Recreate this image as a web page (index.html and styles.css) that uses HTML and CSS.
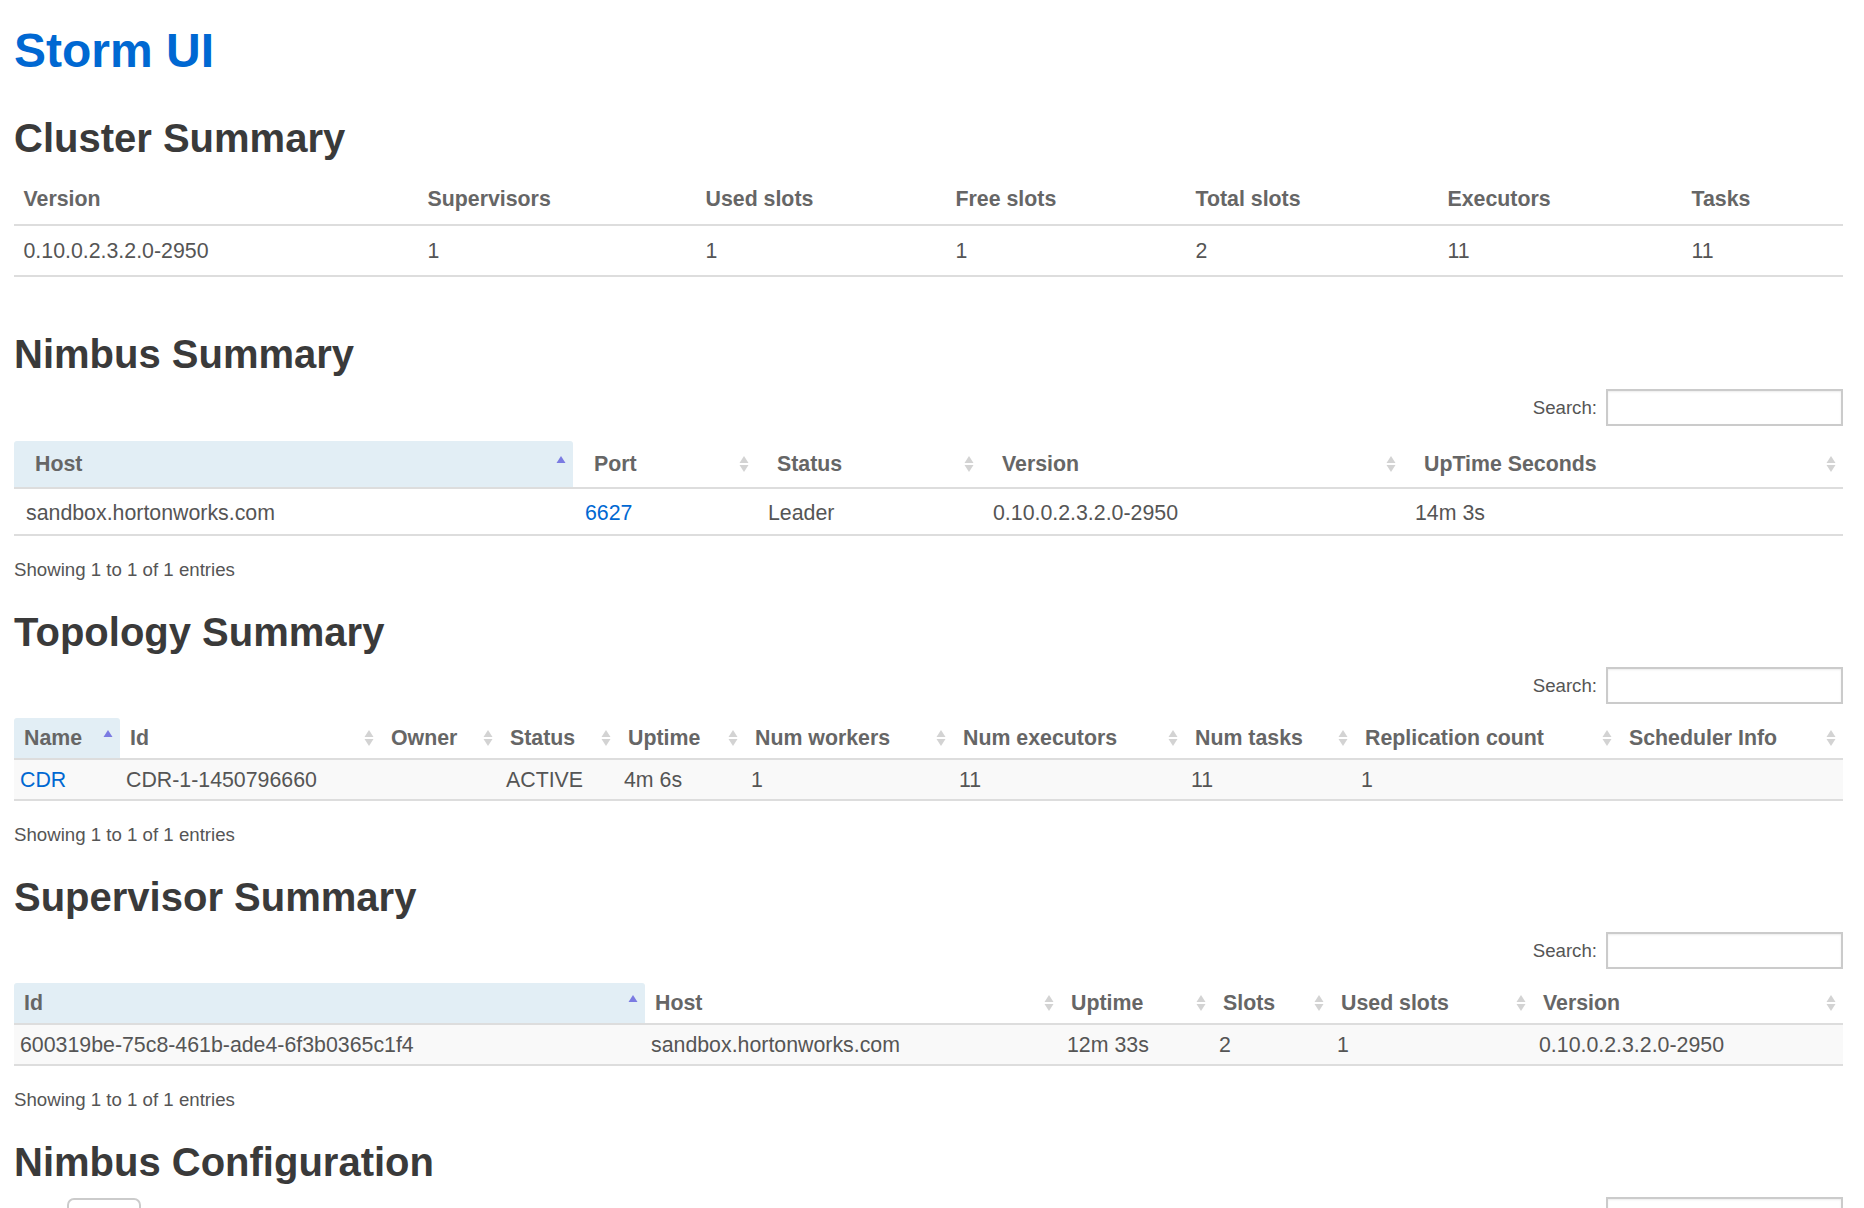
FILE: index.html
```html
<!DOCTYPE html>
<html lang="en">
<head>
<meta charset="utf-8">
<title>Storm UI</title>
<link rel="stylesheet" href="styles.css">
</head>
<body>
<div class="page">
  <h1 class="title"><a href="#">Storm UI</a></h1>

  <section class="summary cluster-section">
    <h2 class="section-title first">Cluster Summary</h2>
    <table class="tbl cluster">
      <colgroup>
        <col class="c1"><col class="c2"><col class="c3"><col class="c4"><col class="c5"><col class="c6"><col class="c7">
      </colgroup>
      <thead>
        <tr><th>Version</th><th>Supervisors</th><th>Used slots</th><th>Free slots</th><th>Total slots</th><th>Executors</th><th>Tasks</th></tr>
      </thead>
      <tbody>
        <tr><td>0.10.0.2.3.2.0-2950</td><td>1</td><td>1</td><td>1</td><td>2</td><td>11</td><td>11</td></tr>
      </tbody>
    </table>
  </section>

  <section class="summary">
    <h2 class="section-title">Nimbus Summary</h2>
    <div class="toolbar"><label class="search">Search:<input class="search-input" type="search"></label></div>
    <table class="tbl dt nimbus">
      <colgroup>
        <col class="c1"><col class="c2"><col class="c3"><col class="c4"><col class="c5">
      </colgroup>
      <thead>
        <tr>
          <th class="sorted">Host<svg class="sort" viewBox="0 0 10 18" width="10" height="18"><polygon class="asc" points="5,1 9.5,8 0.5,8"/></svg></th>
          <th>Port<svg class="sort" viewBox="0 0 10 18" width="10" height="18"><polygon class="both" points="5,1 9.5,8 0.5,8"/><polygon class="both" points="0.5,10 9.5,10 5,17"/></svg></th>
          <th>Status<svg class="sort" viewBox="0 0 10 18" width="10" height="18"><polygon class="both" points="5,1 9.5,8 0.5,8"/><polygon class="both" points="0.5,10 9.5,10 5,17"/></svg></th>
          <th>Version<svg class="sort" viewBox="0 0 10 18" width="10" height="18"><polygon class="both" points="5,1 9.5,8 0.5,8"/><polygon class="both" points="0.5,10 9.5,10 5,17"/></svg></th>
          <th>UpTime Seconds<svg class="sort" viewBox="0 0 10 18" width="10" height="18"><polygon class="both" points="5,1 9.5,8 0.5,8"/><polygon class="both" points="0.5,10 9.5,10 5,17"/></svg></th>
        </tr>
      </thead>
      <tbody>
        <tr><td>sandbox.hortonworks.com</td><td><a href="#">6627</a></td><td>Leader</td><td>0.10.0.2.3.2.0-2950</td><td>14m 3s</td></tr>
      </tbody>
    </table>
    <div class="info">Showing 1 to 1 of 1 entries</div>
  </section>

  <section class="summary">
    <h2 class="section-title">Topology Summary</h2>
    <div class="toolbar"><label class="search">Search:<input class="search-input" type="search"></label></div>
    <table class="tbl dt compact topology">
      <colgroup>
        <col class="c1"><col class="c2"><col class="c3"><col class="c4"><col class="c5"><col class="c6"><col class="c7"><col class="c8"><col class="c9"><col class="c10">
      </colgroup>
      <thead>
        <tr>
          <th class="sorted">Name<svg class="sort" viewBox="0 0 10 18" width="10" height="18"><polygon class="asc" points="5,1 9.5,8 0.5,8"/></svg></th>
          <th>Id<svg class="sort" viewBox="0 0 10 18" width="10" height="18"><polygon class="both" points="5,1 9.5,8 0.5,8"/><polygon class="both" points="0.5,10 9.5,10 5,17"/></svg></th>
          <th>Owner<svg class="sort" viewBox="0 0 10 18" width="10" height="18"><polygon class="both" points="5,1 9.5,8 0.5,8"/><polygon class="both" points="0.5,10 9.5,10 5,17"/></svg></th>
          <th>Status<svg class="sort" viewBox="0 0 10 18" width="10" height="18"><polygon class="both" points="5,1 9.5,8 0.5,8"/><polygon class="both" points="0.5,10 9.5,10 5,17"/></svg></th>
          <th>Uptime<svg class="sort" viewBox="0 0 10 18" width="10" height="18"><polygon class="both" points="5,1 9.5,8 0.5,8"/><polygon class="both" points="0.5,10 9.5,10 5,17"/></svg></th>
          <th>Num workers<svg class="sort" viewBox="0 0 10 18" width="10" height="18"><polygon class="both" points="5,1 9.5,8 0.5,8"/><polygon class="both" points="0.5,10 9.5,10 5,17"/></svg></th>
          <th>Num executors<svg class="sort" viewBox="0 0 10 18" width="10" height="18"><polygon class="both" points="5,1 9.5,8 0.5,8"/><polygon class="both" points="0.5,10 9.5,10 5,17"/></svg></th>
          <th>Num tasks<svg class="sort" viewBox="0 0 10 18" width="10" height="18"><polygon class="both" points="5,1 9.5,8 0.5,8"/><polygon class="both" points="0.5,10 9.5,10 5,17"/></svg></th>
          <th>Replication count<svg class="sort" viewBox="0 0 10 18" width="10" height="18"><polygon class="both" points="5,1 9.5,8 0.5,8"/><polygon class="both" points="0.5,10 9.5,10 5,17"/></svg></th>
          <th>Scheduler Info<svg class="sort" viewBox="0 0 10 18" width="10" height="18"><polygon class="both" points="5,1 9.5,8 0.5,8"/><polygon class="both" points="0.5,10 9.5,10 5,17"/></svg></th>
        </tr>
      </thead>
      <tbody>
        <tr class="striped"><td><a href="#">CDR</a></td><td>CDR-1-1450796660</td><td></td><td>ACTIVE</td><td>4m 6s</td><td>1</td><td>11</td><td>11</td><td>1</td><td></td></tr>
      </tbody>
    </table>
    <div class="info">Showing 1 to 1 of 1 entries</div>
  </section>

  <section class="summary">
    <h2 class="section-title">Supervisor Summary</h2>
    <div class="toolbar"><label class="search">Search:<input class="search-input" type="search"></label></div>
    <table class="tbl dt compact supervisor">
      <colgroup>
        <col class="c1"><col class="c2"><col class="c3"><col class="c4"><col class="c5"><col class="c6">
      </colgroup>
      <thead>
        <tr>
          <th class="sorted">Id<svg class="sort" viewBox="0 0 10 18" width="10" height="18"><polygon class="asc" points="5,1 9.5,8 0.5,8"/></svg></th>
          <th>Host<svg class="sort" viewBox="0 0 10 18" width="10" height="18"><polygon class="both" points="5,1 9.5,8 0.5,8"/><polygon class="both" points="0.5,10 9.5,10 5,17"/></svg></th>
          <th>Uptime<svg class="sort" viewBox="0 0 10 18" width="10" height="18"><polygon class="both" points="5,1 9.5,8 0.5,8"/><polygon class="both" points="0.5,10 9.5,10 5,17"/></svg></th>
          <th>Slots<svg class="sort" viewBox="0 0 10 18" width="10" height="18"><polygon class="both" points="5,1 9.5,8 0.5,8"/><polygon class="both" points="0.5,10 9.5,10 5,17"/></svg></th>
          <th>Used slots<svg class="sort" viewBox="0 0 10 18" width="10" height="18"><polygon class="both" points="5,1 9.5,8 0.5,8"/><polygon class="both" points="0.5,10 9.5,10 5,17"/></svg></th>
          <th>Version<svg class="sort" viewBox="0 0 10 18" width="10" height="18"><polygon class="both" points="5,1 9.5,8 0.5,8"/><polygon class="both" points="0.5,10 9.5,10 5,17"/></svg></th>
        </tr>
      </thead>
      <tbody>
        <tr class="striped"><td>600319be-75c8-461b-ade4-6f3b0365c1f4</td><td>sandbox.hortonworks.com</td><td>12m 33s</td><td>2</td><td>1</td><td>0.10.0.2.3.2.0-2950</td></tr>
      </tbody>
    </table>
    <div class="info">Showing 1 to 1 of 1 entries</div>
  </section>

  <section class="summary">
    <h2 class="section-title">Nimbus Configuration</h2>
    <div class="toolbar split">
      <label class="length">Show <select class="length-select"><option>10</option><option>25</option><option>50</option></select> entries</label>
      <label class="search">Search:<input class="search-input" type="search"></label>
    </div>
  </section>
</div>
</body>
</html>
```
FILE: styles.css
```css
html, body {
  margin: 0;
  padding: 0;
  overflow: hidden;
  background: #fff;
}

body {
  font-family: "Liberation Sans", Arial, Helvetica, sans-serif;
  color: #555;
  font-size: 21.33px;
  line-height: 27px;
}

a {
  color: #0068d2;
  text-decoration: none;
}

.page {
  display: flex;
  flex-direction: column;
  padding: 0 21px 0 14px;
}

.title {
  margin: 22px 0 0;
  font-size: 48px;
  line-height: 58px;
  font-weight: bold;
}

.summary {
  display: flex;
  flex-direction: column;
}

.section-title {
  margin: 25px 0 0;
  font-size: 40px;
  line-height: 48px;
  font-weight: bold;
  color: #3a3a3a;
}

.section-title.first {
  margin-top: 34px;
}

.cluster-section {
  margin-bottom: 28px;
}

/* toolbar with search */
.toolbar {
  display: flex;
  justify-content: flex-end;
  align-items: center;
  margin-top: 11px;
  height: 37px;
}

.toolbar.split {
  justify-content: space-between;
}

.search, .length {
  display: flex;
  align-items: center;
  font-size: 18.67px;
  color: #555;
}

.search-input {
  box-sizing: border-box;
  width: 237px;
  height: 37px;
  margin: 0 0 0 9px;
  border: 2px solid #cbcbcb;
  border-radius: 0;
  box-shadow: inset 0 1px 2px rgba(0, 0, 0, 0.08);
  background: #fff;
  outline: none;
}

.length-select {
  box-sizing: border-box;
  width: 74px;
  height: 37px;
  margin: 2px 6px 0 6px;
  border: 2px solid #cbcbcb;
  border-radius: 7px;
  background: #fff;
  font-size: 18.67px;
  color: #555;
}

/* tables */
.tbl {
  width: 100%;
  table-layout: fixed;
  border-collapse: separate;
  border-spacing: 0;
}

.tbl th {
  position: relative;
  text-align: left;
  font-weight: bold;
  color: #666;
  white-space: nowrap;
  border-bottom: 2px solid #ddd;
}

.tbl td {
  color: #555;
  white-space: nowrap;
  border-bottom: 2px solid #ddd;
}

.cluster {
  margin-top: 11px;
}

.cluster th {
  padding: 12.5px 9.5px 11.5px;
}

.cluster td {
  padding: 12px 9.5px 10px;
}

.cluster .c1 { width: 404px; }
.cluster .c2 { width: 278px; }
.cluster .c3 { width: 250px; }
.cluster .c4 { width: 240px; }
.cluster .c5 { width: 252px; }
.cluster .c6 { width: 244px; }
.cluster .c7 { width: 161px; }

.dt th.sorted {
  background: #e2eef5;
  border-radius: 3px 3px 0 0;
}

.sort {
  position: absolute;
  right: 7px;
  top: 50%;
  margin-top: -9px;
}

.sort .both {
  fill: #d3d3d3;
}

.sort .asc {
  fill: #7b7be2;
}

.nimbus {
  margin-top: 15px;
}

.nimbus th {
  padding: 10px 21px 9px;
}

.nimbus td {
  padding: 10.5px 12px 7.5px;
}

.nimbus .c1 { width: 559px; }
.nimbus .c2 { width: 183px; }
.nimbus .c3 { width: 225px; }
.nimbus .c4 { width: 422px; }
.nimbus .c5 { width: 440px; }

.compact {
  margin-top: 14px;
}

.compact th {
  padding: 7px 10px 6px;
}

.compact td {
  padding: 7px 6px 5px;
}

.striped td {
  background: #f9f9f9;
}

.topology .c1 { width: 106px; }
.topology .c2 { width: 261px; }
.topology .c3 { width: 119px; }
.topology .c4 { width: 118px; }
.topology .c5 { width: 127px; }
.topology .c6 { width: 208px; }
.topology .c7 { width: 232px; }
.topology .c8 { width: 170px; }
.topology .c9 { width: 264px; }
.topology .c10 { width: 224px; }

.supervisor .c1 { width: 631px; }
.supervisor .c2 { width: 416px; }
.supervisor .c3 { width: 152px; }
.supervisor .c4 { width: 118px; }
.supervisor .c5 { width: 202px; }
.supervisor .c6 { width: 310px; }

.info {
  margin-top: 20px;
  font-size: 18.67px;
  line-height: 27px;
  color: #555;
}
```
